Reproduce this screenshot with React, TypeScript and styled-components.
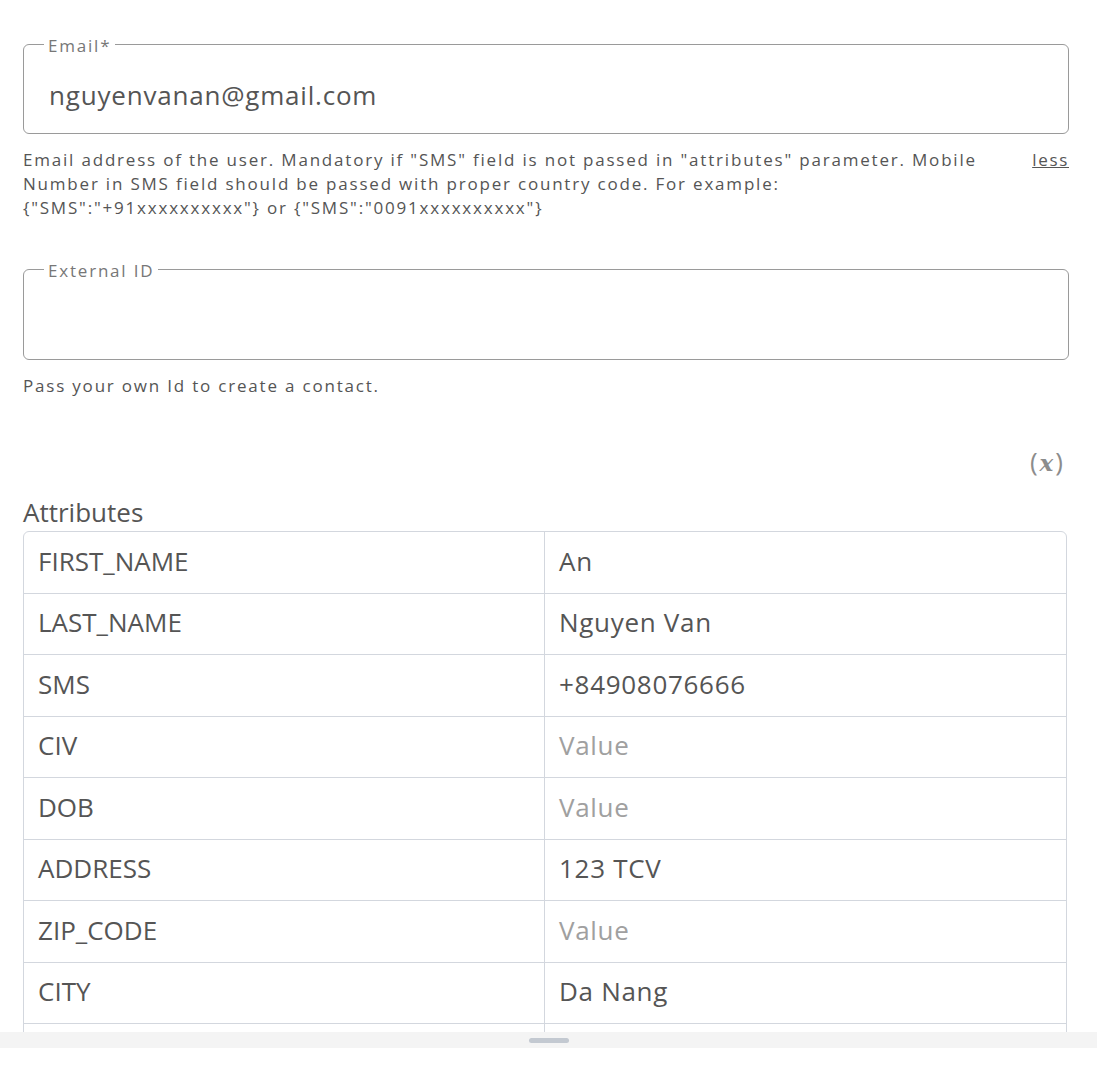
import { useState } from 'react';
import styled, { createGlobalStyle } from 'styled-components';

const GlobalStyle = createGlobalStyle`
  html, body {
    margin: 0;
    padding: 0;
    background: #fff;
    font-family: "Open Sans", "Noto Sans", sans-serif;
  }
  * { box-sizing: border-box; }
`;

type Attr = { name: string; value: string };

const attributes: Attr[] = [
  { name: 'FIRST_NAME', value: 'An' },
  { name: 'LAST_NAME', value: 'Nguyen Van' },
  { name: 'SMS', value: '+84908076666' },
  { name: 'CIV', value: '' },
  { name: 'DOB', value: '' },
  { name: 'ADDRESS', value: '123 TCV' },
  { name: 'ZIP_CODE', value: '' },
  { name: 'CITY', value: 'Da Nang' },
  { name: 'COUNTRY', value: '' },
];

const App = () => {
  const [email, setEmail] = useState('nguyenvanan@gmail.com');
  const [externalId, setExternalId] = useState('');
  const [expanded, setExpanded] = useState(true);

  return (
    <>
      <GlobalStyle />
      <Panel>
        <Scroller>
          <Field>
            <Legend>Email*</Legend>
            <FieldInput value={email} onChange={(e) => setEmail(e.target.value)} />
          </Field>
          <HelpRow>
            <HelpText>
              Email address of the user. Mandatory if "SMS" field is not passed in "attributes" parameter. Mobile
              Number in SMS field should be passed with proper country code. For example:
              {' {"SMS":"+91xxxxxxxxxx"} or {"SMS":"0091xxxxxxxxxx"}'}
            </HelpText>
            <LessLink onClick={() => setExpanded(!expanded)}>{expanded ? 'less' : 'more'}</LessLink>
          </HelpRow>

          <Field $spaced>
            <Legend $tight>External ID</Legend>
            <FieldInput value={externalId} onChange={(e) => setExternalId(e.target.value)} />
          </Field>
          <HelpRow>
            <HelpText>Pass your own Id to create a contact.</HelpText>
          </HelpRow>

          <VarRow>
            <VarButton>
              (<i>x</i>)
            </VarButton>
          </VarRow>

          <SectionTitle>Attributes</SectionTitle>
          <AttrTable>
            <tbody>
              {attributes.map((a) => (
                <tr key={a.name}>
                  <NameCell>{a.name}</NameCell>
                  <ValueCell $empty={!a.value}>{a.value || 'Value'}</ValueCell>
                </tr>
              ))}
            </tbody>
          </AttrTable>
        </Scroller>
        <ResizeBar>
          <Handle />
        </ResizeBar>
      </Panel>
    </>
  );
};

const Panel = styled.div`
  width: 1097px;
`;
const Scroller = styled.div`
  height: 1032px;
  overflow: hidden;
  padding: 34px 28px 0 23px;
`;
const Field = styled.fieldset<{ $spaced?: boolean }>`
  margin: ${(p) => (p.$spaced ? '40px' : '0')} 0 0 0;
  padding: 0 20px 16px 20px;
  width: 1046px;
  border: 1px solid #9a9a9a;
  border-radius: 6px;
  min-width: 0;
`;
const Legend = styled.legend<{ $tight?: boolean }>`
  padding: ${(p) => (p.$tight ? '3px' : '4px')} 4px 0;
  margin-bottom: ${(p) => (p.$tight ? '1px' : '0')};
  font-size: 17px;
  line-height: 16px;
  letter-spacing: 1.8px;
  color: #777;
`;
const FieldInput = styled.input`
  display: block;
  width: 100%;
  margin-top: 19px;
  height: 44px;
  border: none;
  outline: none;
  padding: 0 5px;
  font-family: inherit;
  font-size: 26px;
  letter-spacing: 0.8px;
  color: #555;
  background: transparent;
`;
const HelpRow = styled.div`
  display: flex;
  justify-content: space-between;
  align-items: flex-start;
  width: 1046px;
  margin-top: 14px;
`;
const HelpText = styled.p`
  margin: 0;
  max-width: 975px;
  font-size: 17px;
  line-height: 24px;
  letter-spacing: 1.8px;
  color: #555;
`;
const LessLink = styled.a`
  font-size: 17px;
  line-height: 24px;
  letter-spacing: 1.7px;
  color: #555;
  text-decoration: underline;
  cursor: pointer;
  flex-shrink: 0;
`;
const VarRow = styled.div`
  display: flex;
  justify-content: flex-end;
  width: 1046px;
  margin-top: 48px;
  padding-right: 6px;
`;
const VarButton = styled.span`
  font-size: 26px;
  line-height: 30px;
  color: #8c8c8c;
  i {
    font-family: "DejaVu Serif", serif;
    font-weight: 700;
    font-size: 23px;
    margin: 0 2px;
  }
`;
const SectionTitle = styled.div`
  margin: 18px 0 3px;
  font-size: 26px;
  line-height: 32px;
  color: #555;
`;
const AttrTable = styled.table`
  width: 1044px;
  border-collapse: separate;
  border-spacing: 0;
  border: 1px solid #d3d7de;
  border-radius: 6px 6px 0 0;
  table-layout: fixed;
`;
const Cell = styled.td`
  height: 61.5px;
  padding: 0 14px 3px;
  font-size: 26px;
  border-bottom: 1px solid #d3d7de;
  vertical-align: middle;
`;
const NameCell = styled(Cell)`
  width: 521px;
  color: #555;
  border-right: 1px solid #d3d7de;
`;
const ValueCell = styled(Cell)<{ $empty?: boolean }>`
  color: ${(p) => (p.$empty ? '#a0a0a0' : '#555')};
  letter-spacing: 0.7px;
`;
const ResizeBar = styled.div`
  height: 16px;
  background: #f4f4f4;
  display: flex;
  align-items: center;
  justify-content: center;
`;
const Handle = styled.div`
  width: 40px;
  height: 5px;
  border-radius: 3px;
  background: #c3c9d1;
`;

export default App;
